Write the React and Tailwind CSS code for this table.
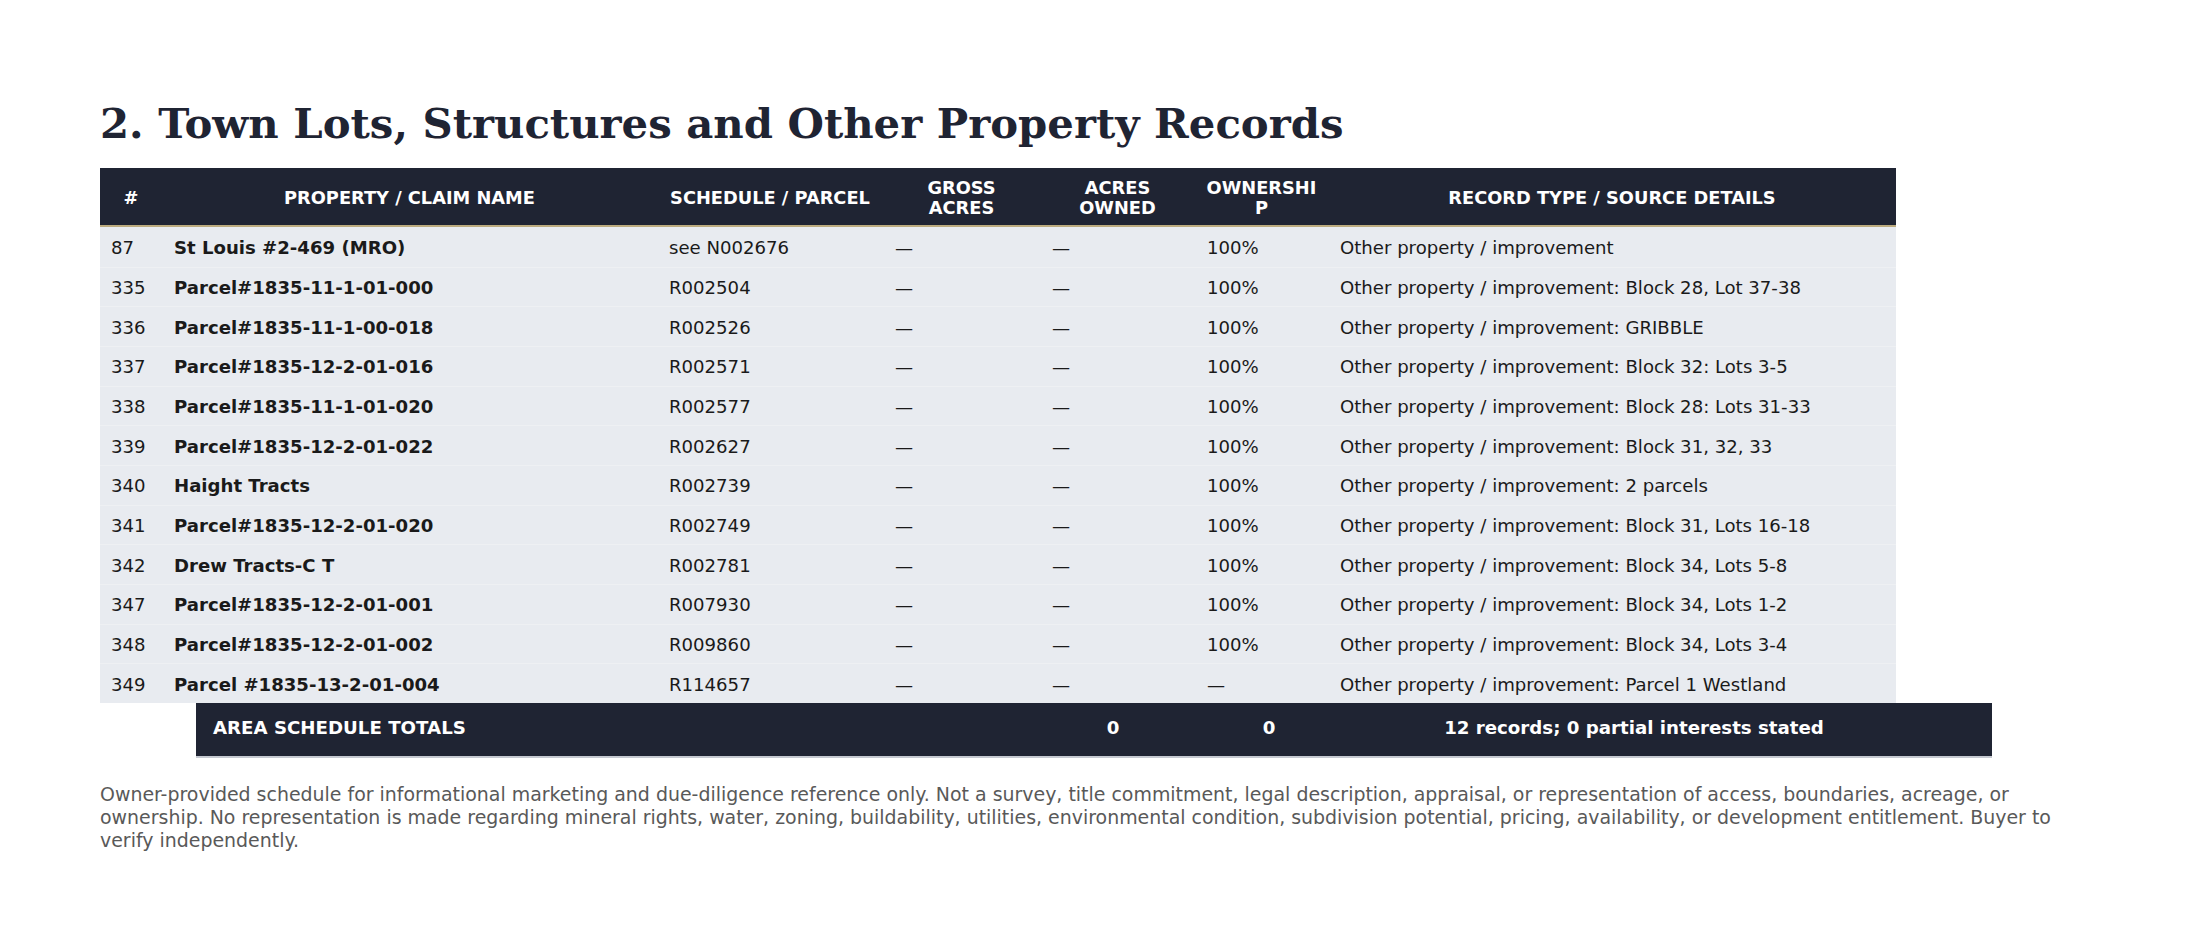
import React from "react";

const rows = [
  ["87", "St Louis #2-469 (MRO)", "see N002676", "—", "—", "100%", "Other property / improvement"],
  ["335", "Parcel#1835-11-1-01-000", "R002504", "—", "—", "100%", "Other property / improvement: Block 28, Lot 37-38"],
  ["336", "Parcel#1835-11-1-00-018", "R002526", "—", "—", "100%", "Other property / improvement: GRIBBLE"],
  ["337", "Parcel#1835-12-2-01-016", "R002571", "—", "—", "100%", "Other property / improvement: Block 32: Lots 3-5"],
  ["338", "Parcel#1835-11-1-01-020", "R002577", "—", "—", "100%", "Other property / improvement: Block 28: Lots 31-33"],
  ["339", "Parcel#1835-12-2-01-022", "R002627", "—", "—", "100%", "Other property / improvement: Block 31, 32, 33"],
  ["340", "Haight Tracts", "R002739", "—", "—", "100%", "Other property / improvement: 2 parcels"],
  ["341", "Parcel#1835-12-2-01-020", "R002749", "—", "—", "100%", "Other property / improvement: Block 31, Lots 16-18"],
  ["342", "Drew Tracts-C T", "R002781", "—", "—", "100%", "Other property / improvement: Block 34, Lots 5-8"],
  ["347", "Parcel#1835-12-2-01-001", "R007930", "—", "—", "100%", "Other property / improvement: Block 34, Lots 1-2"],
  ["348", "Parcel#1835-12-2-01-002", "R009860", "—", "—", "100%", "Other property / improvement: Block 34, Lots 3-4"],
  ["349", "Parcel #1835-13-2-01-004", "R114657", "—", "—", "—", "Other property / improvement: Parcel 1 Westland"],
];

const cols = "grid grid-cols-[62px_495px_226px_157px_155px_133px_568px]";

export default function App() {
  return (
    <div className="min-h-[935px] w-full bg-white px-[100px] pt-[100px] font-['DejaVu_Sans',sans-serif]">
      <h1 className="mb-[20px] font-['DejaVu_Serif',serif] text-[41.8px] font-bold leading-[48px] text-[#1f2433]">
        2. Town Lots, Structures and Other Property Records
      </h1>

      <div className="w-[1796px]">
        <div className={`${cols} h-[59px] border-b-2 border-[#bcab7f] bg-[#1f2433] pt-[3px] text-[17.8px] font-bold leading-[20px] text-white`}>
          <div className="flex items-center justify-center px-[12px] text-center">#</div>
          <div className="flex items-center justify-center px-[12px] text-center">PROPERTY / CLAIM NAME</div>
          <div className="flex items-center justify-center px-[12px] text-center">SCHEDULE / PARCEL</div>
          <div className="flex items-center justify-center px-[12px] text-center">GROSS<br />ACRES</div>
          <div className="flex items-center justify-center px-[12px] text-center">ACRES<br />OWNED</div>
          <div className="flex items-center justify-center px-[8px] text-center">OWNERSHI<br />P</div>
          <div className="flex items-center justify-center px-[12px] text-center">RECORD TYPE / SOURCE DETAILS</div>
        </div>

        {rows.map((r, i) => (
          <div
            key={r[0]}
            className={`${cols} h-[39.67px] items-center bg-[#e8ebf0] pt-[2px] text-[18.1px] leading-[22px] text-[#1a1a1a] ${i > 0 ? "border-t border-[#eef0f3]" : ""}`}
          >
            <div className="pl-[11px] whitespace-nowrap">{r[0]}</div>
            <div className="pl-[12px] font-bold whitespace-nowrap">{r[1]}</div>
            <div className="pl-[12px] whitespace-nowrap">{r[2]}</div>
            <div className="pl-[12px] whitespace-nowrap">{r[3]}</div>
            <div className="pl-[12px] whitespace-nowrap">{r[4]}</div>
            <div className="pl-[12px] whitespace-nowrap">{r[5]}</div>
            <div className="pl-[12px] whitespace-nowrap">{r[6]}</div>
          </div>
        ))}
      </div>

      <div className="ml-[96px] grid h-[55px] w-[1796px] grid-cols-[854px_126px_186px_544px_1fr] items-center border-b-2 border-[#c5c9d1] bg-[#1f2433] pb-[2px] text-[18.2px] font-bold leading-[22px] text-white">
        <div className="pl-[17px] whitespace-nowrap">AREA SCHEDULE TOTALS</div>
        <div className="text-center">0</div>
        <div className="text-center">0</div>
        <div className="text-center whitespace-nowrap">12 records; 0 partial interests stated</div>
        <div></div>
      </div>

      <p className="mt-[25px] w-[1994px] text-[18.95px] leading-[23px] text-[#595959]">
        Owner-provided schedule for informational marketing and due-diligence reference only. Not a survey, title commitment, legal description, appraisal, or representation of access, boundaries, acreage, or ownership. No representation is made regarding mineral rights, water, zoning, buildability, utilities, environmental condition, subdivision potential, pricing, availability, or development entitlement. Buyer to verify independently.
      </p>
    </div>
  );
}
